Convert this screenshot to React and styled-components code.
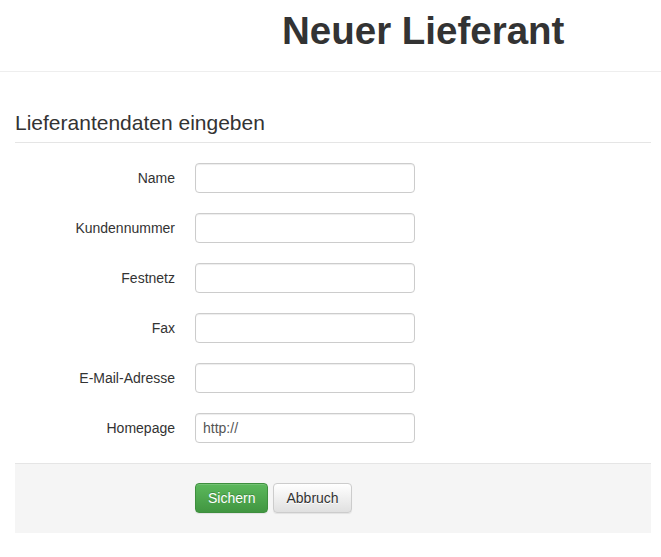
import React from "react";
import styled, { createGlobalStyle } from "styled-components";

const Global = createGlobalStyle`
  html, body { margin: 0; padding: 0; background: #fff; }
  body { font-family: "Liberation Sans", Arial, sans-serif; font-size: 14px; color: #333; }
`;

const Header = styled.header`
  padding: 10px 0 19px 282px;
  border-bottom: 1px solid #eee;
`;

const Title = styled.h1`
  margin: 0;
  font-size: 38.5px;
  line-height: 42px;
  font-weight: bold;
  color: #333;
`;

const Container = styled.main`
  padding: 0 10px 0 15px;
`;

const Legend = styled.h2`
  margin: 36px 0 20px;
  padding-bottom: 4px;
  font-size: 21px;
  line-height: 30px;
  font-weight: normal;
  color: #333;
  border-bottom: 1px solid #e5e5e5;
`;

const Row = styled.div`
  display: flex;
  align-items: center;
  gap: 20px;
  margin-bottom: 20px;
`;

const Label = styled.label`
  width: 160px;
  text-align: right;
  font-size: 14px;
  color: #333;
`;

const Input = styled.input`
  box-sizing: border-box;
  width: 220px;
  height: 30px;
  padding: 0 7px;
  border: 1px solid #ccc;
  border-radius: 4px;
  box-shadow: inset 0 1px 1px rgba(0, 0, 0, 0.075);
  font-family: "Liberation Sans", Arial, sans-serif;
  font-size: 14px;
  color: #555;
  outline: none;
`;

const Footer = styled.div`
  display: flex;
  gap: 5px;
  padding: 19px 0 20px 180px;
  background: #f5f5f5;
  border-top: 1px solid #e5e5e5;
`;

const Button = styled.button`
  box-sizing: border-box;
  height: 30px;
  padding: 0 12px;
  border-radius: 4px;
  font-family: "Liberation Sans", Arial, sans-serif;
  font-size: 14px;
  cursor: pointer;
  border: 1px solid ${(p) => (p.$primary ? "#3e8f3e" : "#ccc")};
  color: ${(p) => (p.$primary ? "#fff" : "#333")};
  background: ${(p) =>
    p.$primary
      ? "linear-gradient(to bottom, #5cb85c 0%, #419641 100%)"
      : "linear-gradient(to bottom, #fff 0%, #e0e0e0 100%)"};
  text-shadow: ${(p) => (p.$primary ? "0 -1px 0 rgba(0,0,0,0.2)" : "0 1px 0 #fff")};
  box-shadow: inset 0 1px 0 rgba(255, 255, 255, 0.15), 0 1px 1px rgba(0, 0, 0, 0.075);
`;

const fields = [
  ["Name", ""],
  ["Kundennummer", ""],
  ["Festnetz", ""],
  ["Fax", ""],
  ["E-Mail-Adresse", ""],
  ["Homepage", "http://"],
];

export default function App() {
  return (
    <>
      <Global />
      <Header>
        <Title>Neuer Lieferant</Title>
      </Header>
      <Container>
        <Legend>Lieferantendaten eingeben</Legend>
        {fields.map(([label, value]) => (
          <Row key={label}>
            <Label>{label}</Label>
            <Input defaultValue={value} />
          </Row>
        ))}
        <Footer>
          <Button $primary>Sichern</Button>
          <Button>Abbruch</Button>
        </Footer>
      </Container>
    </>
  );
}
